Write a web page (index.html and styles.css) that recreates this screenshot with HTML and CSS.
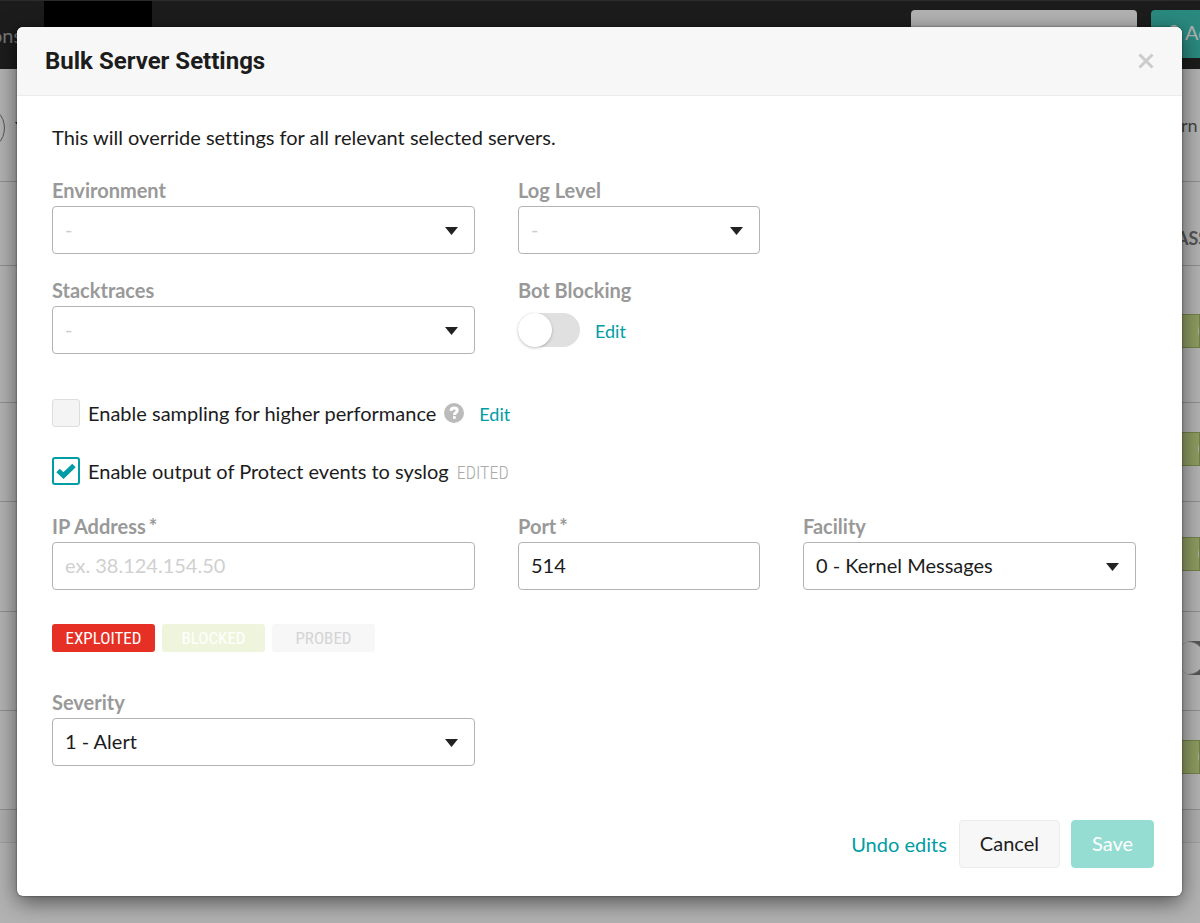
FILE: index.html
```html
<!DOCTYPE html>
<html lang="en">
<head>
<meta charset="utf-8">
<meta name="viewport" content="width=device-width, initial-scale=1">
<title>Bulk Server Settings</title>
<link rel="stylesheet" href="styles.css">
</head>
<body>
<div class="page">
  <header class="topbar">
    <span class="nav-item">ons</span>
    <span class="nav-active"></span>
    <span class="search"></span>
    <span class="add"><svg width="14" height="16" viewBox="0 0 14 16"><circle cx="7" cy="5" r="4"/></svg>Ad</span>
  </header>
  <div class="toolbar">
    <span class="ring"></span>
    <svg class="caret" width="10" height="6" viewBox="0 0 10 6"><path d="M0 0h10L5 6z"/></svg>
    <span class="toolbar-text">rn f</span>
  </div>
  <table class="servers">
    <tr class="row-head"><td></td><th>ASS</th></tr>
    <tr class="row-xl"><td></td><td><span class="pill"><i></i></span></td></tr>
    <tr class="row-md"><td></td><td><span class="pill"><i></i></span></td></tr>
    <tr class="row-lg"><td></td><td><span class="pill"><i></i></span></td></tr>
    <tr class="row-md"><td></td><td><span class="track"><i></i></span></td></tr>
    <tr class="row-md"><td></td><td><span class="pill"><i></i></span></td></tr>
    <tr class="row-foot"><td></td><td></td></tr>
  </table>
</div>

<div class="overlay">
  <form class="modal" role="dialog" aria-labelledby="title">
    <header class="modal-head">
      <h1 id="title">Bulk Server Settings</h1>
      <button class="close" type="button" aria-label="Close"><svg width="16" height="16" viewBox="0 0 16 16"><path d="M1.500 1.500l13 13M14.500 1.500l-13 13"/></svg></button>
    </header>
    <div class="modal-body">
      <p class="intro">This will override settings for all relevant selected servers.</p>
      <div class="fields">
        <div class="field">
          <label for="env">Environment</label>
          <div class="select empty"><select id="env"><option>-</option></select><svg width="13" height="8" viewBox="0 0 13 8"><path d="M0 0h13L6.500 8z"/></svg></div>
        </div>
        <div class="field">
          <label for="log">Log Level</label>
          <div class="select empty"><select id="log"><option>-</option></select><svg width="13" height="8" viewBox="0 0 13 8"><path d="M0 0h13L6.500 8z"/></svg></div>
        </div>
      </div>
      <div class="fields">
        <div class="field">
          <label for="stack">Stacktraces</label>
          <div class="select empty"><select id="stack"><option>-</option></select><svg width="13" height="8" viewBox="0 0 13 8"><path d="M0 0h13L6.500 8z"/></svg></div>
        </div>
        <div class="field">
          <label for="bot">Bot Blocking</label>
          <div class="switch-row"><input class="switch" id="bot" type="checkbox" role="switch"><a class="edit" href="#">Edit</a></div>
        </div>
      </div>
      <div class="checks">
        <div class="check-row">
          <span class="check"><input id="sampling" type="checkbox"></span>
          <label for="sampling">Enable sampling for higher performance</label>
          <svg class="help" width="20" height="20" viewBox="0 0 20 20"><circle cx="10" cy="10" r="10"/><path d="M7 7.800C7.200 5.800 8.500 5 10.200 5c1.700 0 3 1 3 2.500 0 2.200-2.800 2.200-2.800 4.400"/><rect x="9" y="13.200" width="2.800" height="2.600"/></svg>
          <a class="edit" href="#">Edit</a>
        </div>
        <div class="check-row">
          <span class="check"><input id="syslog" type="checkbox" checked><svg width="20" height="16" viewBox="0 0 20 16"><path d="M2 7.500l5.500 5L18 2.500"/></svg></span>
          <label for="syslog">Enable output of Protect events to syslog</label>
          <span class="edited">EDITED</span>
        </div>
      </div>
      <div class="fields">
        <div class="field">
          <label for="ip">IP Address<span class="req">*</span></label>
          <input class="text" id="ip" type="text" placeholder="ex. 38.124.154.50">
        </div>
        <div class="field">
          <label for="port">Port<span class="req">*</span></label>
          <input class="text" id="port" type="text" value="514">
        </div>
        <div class="field">
          <label for="facility">Facility</label>
          <div class="select"><select id="facility"><option>0 - Kernel Messages</option></select><svg width="13" height="8" viewBox="0 0 13 8"><path d="M0 0h13L6.500 8z"/></svg></div>
        </div>
      </div>
      <div class="tags">
        <button class="tag exploited" type="button">EXPLOITED</button>
        <button class="tag blocked" type="button">BLOCKED</button>
        <button class="tag probed" type="button">PROBED</button>
      </div>
      <div class="fields">
        <div class="field">
          <label for="severity">Severity</label>
          <div class="select"><select id="severity"><option>1 - Alert</option></select><svg width="13" height="8" viewBox="0 0 13 8"><path d="M0 0h13L6.500 8z"/></svg></div>
        </div>
      </div>
    </div>
    <footer class="actions">
      <a class="undo" href="#">Undo edits</a>
      <button class="btn cancel" type="button">Cancel</button>
      <button class="btn save" type="submit">Save</button>
    </footer>
  </form>
</div>
</body>
</html>
```

FILE: styles.css
```css
* { box-sizing: border-box; }
body {
  margin: 0;
  overflow: hidden;
  font: 20px/24px Lato, "Liberation Sans", sans-serif;
  font-variant-ligatures: none;
  color: #1c1c1c;
}
svg { display: block; flex: none; }
a { color: #009da5; text-decoration: none; }
button, input, select { font: inherit; color: inherit; margin: 0; }

/* Dimmed server list behind the dialog */
.page { min-height: 100vh; overflow: hidden; background: #b2b2b2; }
.topbar {
  display: flex;
  height: 69px;
  background: #1c1c1c;
  border-top: 1px solid #2b2b2b;
}
.nav-item { width: 53px; margin-left: -9px; padding-top: 22px; color: #777; }
.nav-active { width: 108px; background: #000; }
.search { width: 226px; height: 48px; margin: 9px 14px 0 auto; border-radius: 4px; background: #b2b2b2; }
.add {
  display: flex;
  gap: 4px;
  width: 49px;
  height: 48px;
  margin-top: 9px;
  padding: 10px 0 0 16px;
  border-radius: 4px 0 0 4px;
  background: #2a8a7f;
  color: #b2b2b2;
  overflow: hidden;
}
.add svg { margin-top: 4px; fill: #b2b2b2; }
.toolbar { display: flex; align-items: center; height: 112px; }
.ring { width: 46px; height: 46px; margin: 5px 10px 0 -41px; border: 1px solid #555; border-radius: 50%; }
.caret { fill: #222; }
.toolbar-text { width: 19px; margin-left: auto; font-size: 18px; color: #444; white-space: nowrap; }
.servers { width: 100%; border-collapse: collapse; table-layout: fixed; border-bottom: 1px solid #9f9f9f; }
.servers td, .servers th { padding: 0 0 6px; border-top: 1px solid #8f8f8f; }
.servers td:last-child, .servers th { width: 24px; }
.servers th { padding: 28px 0 0; font-size: 18px; text-align: left; color: #555; }
.row-head { height: 84px; }
.row-xl { height: 137px; }
.row-lg { height: 110px; }
.row-md { height: 99px; }
.row-foot { height: 33px; background: #adadad; }
.pill { display: flex; align-items: center; height: 34px; padding-left: 21px; border: 1px solid #718149; background: #8d9c60; overflow: hidden; }
.pill i { flex: none; width: 22px; height: 22px; border: 2px solid #b2b2b2; border-radius: 50%; }
.track { display: flex; height: 34px; background: #555; overflow: hidden; border-radius: 17px 0 0 17px; }
.track i { flex: none; width: 34px; margin-left: -5px; border-radius: 0 17px 17px 0; background: #b2b2b2; border: 1px solid #777; }

/* Dialog */
.overlay { position: absolute; inset: 0; padding: 27px 18px 27px 17px; }
.modal {
  border-radius: 6px;
  background: #fff;
  box-shadow: 0 0 2px rgba(0, 0, 0, .6), 0 6px 22px rgba(0, 0, 0, .55);
}
.modal-head {
  display: flex;
  align-items: center;
  justify-content: space-between;
  height: 69px;
  padding: 0 28px;
  border-bottom: 1px solid #ececec;
  border-radius: 6px 6px 0 0;
  background: #f7f7f7;
}
h1 { margin: 0; font: 700 24px/32px Roboto, "Liberation Sans", sans-serif; }
.close { padding: 0; border: 0; background: none; }
.close path { stroke: #ccc; stroke-width: 3; }
.modal-body { padding: 29px 46px 0 35px; }
.intro { margin: 0 0 29px; }
.fields {
  display: grid;
  grid-template-columns: 423fr 242fr 333fr;
  column-gap: 43px;
  margin-bottom: 24px;
}
.field { min-width: 0; }
.field label { display: block; margin-bottom: 4px; font-weight: 700; color: #999; }
.req { margin-left: 3px; }
.select { display: grid; align-items: center; }
.select select, .select svg { grid-area: 1 / 1; }
.select svg { justify-self: end; margin: 2px 17px 0 0; fill: #222; pointer-events: none; }
select, .text {
  width: 100%;
  height: 48px;
  padding: 0 12px 2px;
  border: 1px solid #b3b3b3;
  border-radius: 4px;
  background: #fff;
  appearance: none;
}
.empty select { color: #ccc; }
::placeholder { color: #d0d0d0; opacity: 1; }
.switch-row { display: flex; align-items: center; gap: 15px; height: 48px; }
.switch {
  display: flex;
  appearance: none;
  width: 62px;
  height: 34px;
  border-radius: 17px;
  background: #e0e0e0;
}
.switch::before {
  content: "";
  width: 34px;
  border-radius: 50%;
  background: #fff;
  box-shadow: 0 1px 3px rgba(0, 0, 0, .25);
}
.edit { padding-top: 2px; font-size: 18px; }
.checks { display: grid; gap: 30px; margin: 45px 0 29px; }
.check-row { display: flex; align-items: center; height: 28px; }
.check { display: grid; place-items: center; margin-right: 8px; }
.check input, .check svg { grid-area: 1 / 1; }
.check input {
  width: 28px;
  height: 28px;
  border: 1px solid #ddd;
  border-radius: 3px;
  background: #f4f4f4;
  appearance: none;
}
.check input:checked { border: 2px solid #009da5; background: #fff; }
.check path { fill: none; stroke: #009da5; stroke-width: 5; }
.help { margin: 0 15px 0 8px; fill: #bbb; }
.help path { fill: none; stroke: #fff; stroke-width: 3; }
.help rect { fill: #fff; }
.edited, .tag { font-family: "Roboto Condensed", Roboto, sans-serif; }
.edited { margin-left: 8px; padding-top: 4px; font-size: 18px; font-weight: 300; color: #aaa; }
.tags { display: flex; gap: 7px; margin: 34px 0 38px; }
.tag { width: 103px; height: 28px; padding: 0; border: 0; border-radius: 3px; font-size: 17px; }
.exploited { background: #e63025; color: #fff; }
.blocked { background: #eef5dc; color: #fff; }
.probed { background: #f7f7f7; color: #d4d4d4; }
.actions { display: flex; align-items: center; justify-content: flex-end; padding: 30px 28px 28px; }
.undo { margin-right: 12px; }
.btn { height: 48px; padding: 0 20px 2px; border: 1px solid #ececec; border-radius: 4px; background: #f7f7f7; }
.save { margin-left: 11px; border-color: #95ddd3; background: #95ddd3; color: #fff; }
```
